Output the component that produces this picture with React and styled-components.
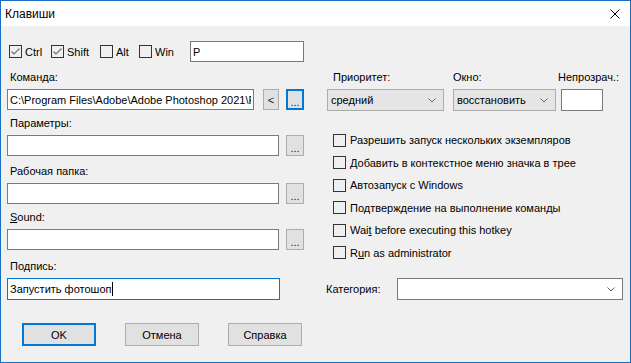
import React from 'react';
import styled, { createGlobalStyle } from 'styled-components';

const GlobalStyle = createGlobalStyle`
  html, body {
    margin: 0;
    padding: 0;
    background: #f0f0f0;
  }
  body {
    font-family: "Liberation Sans", Arial, sans-serif;
    font-size: 11px;
    color: #000;
  }
`;

const Window = styled.div`
  width: 631px;
  height: 363px;
  box-sizing: border-box;
  border: 1px solid #1a6ec0;
  background: #f0f0f0;
  display: flex;
  flex-direction: column;
`;

const TitleBar = styled.div`
  height: 25px;
  flex: none;
  background: #fff;
  display: flex;
  align-items: center;
  justify-content: space-between;
  padding: 0 10px 0 4px;
  font-size: 12px;
`;

const Body = styled.div`
  flex: 1;
  display: flex;
  flex-direction: column;
  padding: 15px 7px 0 6px;
`;

const HotkeyRow = styled.div`
  display: flex;
  align-items: center;
  height: 21px;
`;

const CheckItem = styled.label`
  display: flex;
  align-items: center;
  gap: ${p => p.$gap || 3}px;
  width: ${p => (p.$w ? `${p.$w}px` : 'auto')};
  margin-left: ${p => p.$ml || 0}px;
  height: ${p => p.$h || 21}px;
  white-space: nowrap;
`;

const Box = styled.span`
  width: 11px;
  height: 11px;
  flex: none;
  border: 1px solid #333;
  background: #f0f0f0;
  display: flex;
  align-items: center;
  justify-content: center;
`;

const TextBox = styled.div`
  box-sizing: border-box;
  height: ${p => p.$h || 21}px;
  width: ${p => (p.$w ? `${p.$w}px` : 'auto')};
  flex: ${p => (p.$w ? 'none' : 1)};
  min-width: 0;
  background: #fff;
  border: 1px solid ${p => (p.$focused ? '#0078d7' : '#7a7a7a')};
  padding: 0 2px;
  display: flex;
  align-items: center;
  white-space: nowrap;
  overflow: hidden;
`;

const Clip = styled.span`
  overflow: hidden;
  flex: 1;
  min-width: 0;
`;

const Caret = styled.span`
  display: inline-block;
  width: 1px;
  height: 14px;
  background: #000;
  margin-left: 1px;
`;

const Columns = styled.div`
  display: grid;
  grid-template-columns: 297px 297px;
  column-gap: 22px;
  margin-top: 8px;
`;

const LeftColumn = styled.div`
  display: flex;
  flex-direction: column;
`;

const FieldGroup = styled.div`
  display: flex;
  flex-direction: column;
  align-items: flex-start;
  gap: 5px;
  margin-top: ${p => p.$mt || 0}px;
`;

const Label = styled.div`
  height: 14px;
  line-height: 14px;
  padding-left: ${p => p.$pl ?? 3}px;
  white-space: nowrap;
`;

const InputRow = styled.div`
  display: flex;
  align-items: center;
  gap: 7px;
  align-self: stretch;
`;

const SmallButton = styled.button`
  box-sizing: border-box;
  width: ${p => p.$w || 18}px;
  height: 21px;
  flex: none;
  padding: 0;
  margin-left: ${p => p.$ml || 0}px;
  background: #e1e1e1;
  border: ${p => (p.$focused ? '2px solid #0078d7' : '1px solid #adadad')};
  font-family: inherit;
  font-size: 11px;
  color: #222;
  display: flex;
  align-items: center;
  justify-content: center;
  padding-top: ${p => (p.$dots ? 5 : 0)}px;
`;

const RightColumn = styled.div`
  display: flex;
  flex-direction: column;
`;

const OptionsRow = styled.div`
  display: flex;
  align-items: flex-start;
`;

const OptionGroup = styled.div`
  display: flex;
  flex-direction: column;
  gap: 5px;
  margin-left: ${p => p.$ml || 0}px;
`;

const Combo = styled.div`
  box-sizing: border-box;
  width: ${p => (p.$w ? `${p.$w}px` : 'auto')};
  flex: ${p => (p.$w ? 'none' : 1)};
  height: 22px;
  background: ${p => (p.$editable ? '#fff' : '#e5e5e5')};
  border: 1px solid ${p => (p.$editable ? '#7a7a7a' : '#acacac')};
  display: flex;
  align-items: center;
  justify-content: space-between;
  padding: 0 7px 0 3px;
  white-space: nowrap;
`;

const CheckList = styled.div`
  display: flex;
  flex-direction: column;
  margin-top: 18px;
  padding-left: 7px;
`;

const CategoryRow = styled.div`
  margin-top: auto;
  display: flex;
  align-items: center;
  height: 22px;
`;

const CategoryLabel = styled.div`
  width: 71px;
  flex: none;
`;

const ButtonRow = styled.div`
  display: flex;
  gap: 29px;
  margin: 23px 0 0 15px;
`;

const DialogButton = styled.button`
  box-sizing: border-box;
  width: 74px;
  height: 23px;
  background: #e1e1e1;
  border: ${p => (p.$default ? '2px solid #0078d7' : '1px solid #adadad')};
  font-family: inherit;
  font-size: 11px;
  color: #000;
  padding: 0;
`;

const Check = () => (
  <svg width="11" height="11" viewBox="0 0 11 11">
    <polyline points="1.5,5.5 4,8 9.5,2.5" fill="none" stroke="#707070" strokeWidth="1.1" />
  </svg>
);

const Chevron = () => (
  <svg width="8" height="5" viewBox="0 0 8 5">
    <polyline points="0.5,0.5 4,4 7.5,0.5" fill="none" stroke="#606060" strokeWidth="1" />
  </svg>
);

const CloseIcon = () => (
  <svg width="10" height="10" viewBox="0 0 10 10">
    <path d="M0.5 0.5 L9.5 9.5 M9.5 0.5 L0.5 9.5" stroke="#000" strokeWidth="1" />
  </svg>
);

const hotkeys = [
  { name: 'Ctrl', checked: true, w: 42 },
  { name: 'Shift', checked: true, w: 49 },
  { name: 'Alt', checked: false, w: 39 },
  { name: 'Win', checked: false, w: 51 },
];

const options = [
  'Разрешить запуск нескольких экземпляров',
  'Добавить в контекстное меню значка в трее',
  'Автозапуск с Windows',
  'Подтверждение на выполнение команды',
  <>Wai<u>t</u> before executing this hotkey</>,
  <>R<u>u</u>n as administrator</>,
];

const BrowseField = ({ label, mt }) => (
  <FieldGroup $mt={mt}>
    <Label>{label}</Label>
    <InputRow>
      <TextBox />
      <SmallButton $dots>...</SmallButton>
    </InputRow>
  </FieldGroup>
);

export default function App() {
  return (
    <Window>
      <GlobalStyle />
      <TitleBar>
        <span>Клавиши</span>
        <CloseIcon />
      </TitleBar>
      <Body>
        <HotkeyRow>
          {hotkeys.map((k, i) => (
            <CheckItem key={k.name} $w={k.w} $ml={i === 0 ? 2 : 0}>
              <Box>{k.checked && <Check />}</Box>
              <span>{k.name}</span>
            </CheckItem>
          ))}
          <TextBox $w={114}>P</TextBox>
        </HotkeyRow>

        <Columns>
          <LeftColumn>
            <FieldGroup>
              <Label>Команда:</Label>
              <InputRow>
                <TextBox>
                  <Clip>C:\Program Files\Adobe\Adobe Photoshop 2021\P</Clip>
                </TextBox>
                <SmallButton $w={16} $ml={2}>&lt;</SmallButton>
                <SmallButton $focused $dots>...</SmallButton>
              </InputRow>
            </FieldGroup>
            <BrowseField label="Параметры:" mt={6} />
            <BrowseField label="Рабочая папка:" mt={8} />
            <BrowseField label={<><u>S</u>ound:</>} mt={6} />
            <FieldGroup $mt={9}>
              <Label>Подпись:</Label>
              <TextBox $focused $h={22} $w={273}>
                <span>Запустить фотошоп</span>
                <Caret />
              </TextBox>
            </FieldGroup>
          </LeftColumn>

          <RightColumn>
            <OptionsRow>
              <OptionGroup $ml={1}>
                <Label $pl={6}>Приоритет:</Label>
                <Combo $w={117}>
                  <span>средний</span>
                  <Chevron />
                </Combo>
              </OptionGroup>
              <OptionGroup $ml={9}>
                <Label $pl={0}>Окно:</Label>
                <Combo $w={103}>
                  <span>восстановить</span>
                  <Chevron />
                </Combo>
              </OptionGroup>
              <OptionGroup $ml={2}>
                <Label $pl={0}>Непрозрач.:</Label>
                <TextBox $w={42} $h={22} style={{ marginLeft: 3 }} />
              </OptionGroup>
            </OptionsRow>

            <CheckList>
              {options.map((text, i) => (
                <CheckItem key={i} $gap={4} $h={22.5}>
                  <Box />
                  <span>{text}</span>
                </CheckItem>
              ))}
            </CheckList>

            <CategoryRow>
              <CategoryLabel>Категория:</CategoryLabel>
              <Combo $editable>
                <span />
                <Chevron />
              </Combo>
            </CategoryRow>
          </RightColumn>
        </Columns>

        <ButtonRow>
          <DialogButton $default>OK</DialogButton>
          <DialogButton>Отмена</DialogButton>
          <DialogButton>Справка</DialogButton>
        </ButtonRow>
      </Body>
    </Window>
  );
}
